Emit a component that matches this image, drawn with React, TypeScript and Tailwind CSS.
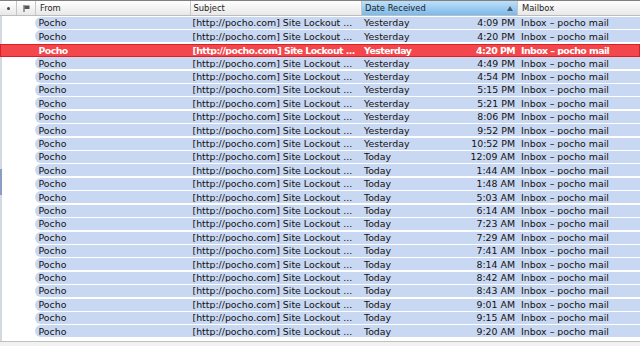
import React from 'react';

type Msg = { day: string; time: string; selected?: boolean };

const messages: Msg[] = [
  { day: 'Yesterday', time: '4:09 PM' },
  { day: 'Yesterday', time: '4:20 PM' },
  { day: 'Yesterday', time: '4:20 PM', selected: true },
  { day: 'Yesterday', time: '4:49 PM' },
  { day: 'Yesterday', time: '4:54 PM' },
  { day: 'Yesterday', time: '5:15 PM' },
  { day: 'Yesterday', time: '5:21 PM' },
  { day: 'Yesterday', time: '8:06 PM' },
  { day: 'Yesterday', time: '9:52 PM' },
  { day: 'Yesterday', time: '10:52 PM' },
  { day: 'Today', time: '12:09 AM' },
  { day: 'Today', time: '1:44 AM' },
  { day: 'Today', time: '1:48 AM' },
  { day: 'Today', time: '5:03 AM' },
  { day: 'Today', time: '6:14 AM' },
  { day: 'Today', time: '7:23 AM' },
  { day: 'Today', time: '7:29 AM' },
  { day: 'Today', time: '7:41 AM' },
  { day: 'Today', time: '8:14 AM' },
  { day: 'Today', time: '8:42 AM' },
  { day: 'Today', time: '8:43 AM' },
  { day: 'Today', time: '9:01 AM' },
  { day: 'Today', time: '9:15 AM' },
  { day: 'Today', time: '9:20 AM' },
];

const SUBJECT = '[http://pocho.com] Site Lockout ...';

function Cells({ msg }: { msg: Msg }) {
  return (
    <>
      <div className="w-[155px] shrink-0 pl-[3.5px] whitespace-nowrap overflow-hidden">Pocho</div>
      <div className="w-[171px] shrink-0 pl-[2.5px] whitespace-nowrap overflow-hidden">{SUBJECT}</div>
      <div className="w-[156px] shrink-0 pl-[3px] pr-[2px] flex justify-between whitespace-nowrap">
        <span>{msg.day}</span>
        <span>{msg.time}</span>
      </div>
      <div className="flex-1 pl-[4px] whitespace-nowrap overflow-hidden">Inbox – pocho mail</div>
    </>
  );
}

function Row({ msg }: { msg: Msg }) {
  if (msg.selected) {
    return (
      <div className="relative z-[1] h-[13.42px] flex items-center bg-[#f3474b] border border-[#dc1f26] text-white font-bold tracking-[-0.55px]">
        <div className="w-[34px] shrink-0" />
        <Cells msg={msg} />
      </div>
    );
  }
  return (
    <div className="h-[13.42px] flex pb-[1.42px]">
      <div className="w-[35px] shrink-0" />
      <div className="flex-1 flex items-center bg-[#c9d8f2] rounded-l-[6px] text-[#111]">
        <Cells msg={msg} />
      </div>
    </div>
  );
}

function HeaderCell({ children, className = '' }: { children?: React.ReactNode; className?: string }) {
  return (
    <div className={`h-full flex items-center border-r border-[#c6c6c6] shrink-0 ${className}`}>
      {children}
    </div>
  );
}

export default function App() {
  return (
    <div className="w-[640px] h-[346px] bg-white relative overflow-hidden font-['DejaVu_Sans',sans-serif] text-[9.4px] leading-none">
      {/* column header */}
      <div className="relative z-10 h-[16px] flex border-t border-[#7f7f7f] border-b border-b-[#bdbdbd] bg-gradient-to-b from-white to-[#e8e8e8] text-[8.4px] text-[#1e1e1e]">
        <HeaderCell className="w-[17px] justify-center">
          <span className="w-[3px] h-[3px] rounded-full bg-[#444]" />
        </HeaderCell>
        <HeaderCell className="w-[19px] justify-center">
          <svg width="7" height="7" viewBox="0 0 7 7">
            <rect x="0.5" y="0" width="1" height="7" fill="#444" />
            <path d="M1.5 0.5 H6.5 V4 H1.5 Z" fill="#555" />
          </svg>
        </HeaderCell>
        <HeaderCell className="w-[155px] pl-[4px]">From</HeaderCell>
        <HeaderCell className="w-[171px] pl-[2.5px]">Subject</HeaderCell>
        <HeaderCell className="w-[156px] pl-[3px] pr-[4px] justify-between bg-gradient-to-b from-[#bfe0f8] to-[#7ab9eb] border-[#6aa6d8]">
          <span>Date Received</span>
          <svg width="6" height="5" viewBox="0 0 6 5">
            <path d="M0 5 L3 0 L6 5 Z" fill="#4a5a6a" />
          </svg>
        </HeaderCell>
        <div className="flex-1 h-full flex items-center pl-[4px]">Mailbox</div>
      </div>

      {/* left edge strip */}
      <div className="absolute left-0 top-[16px] h-[325px] w-[2px] bg-[#d4d9e1]">
        <div className="mt-[153px] h-[26px] bg-[#8b9dc2]" />
      </div>

      {/* message rows */}
      <div className="flex flex-col pt-[1px]">
        {messages.map((m, i) => (
          <Row key={i} msg={m} />
        ))}
      </div>

      {/* bottom edge */}
      <div className="mt-[2px] h-[10px] border-t border-[#c0c0c0] bg-[#f1f1f1]" />
    </div>
  );
}
